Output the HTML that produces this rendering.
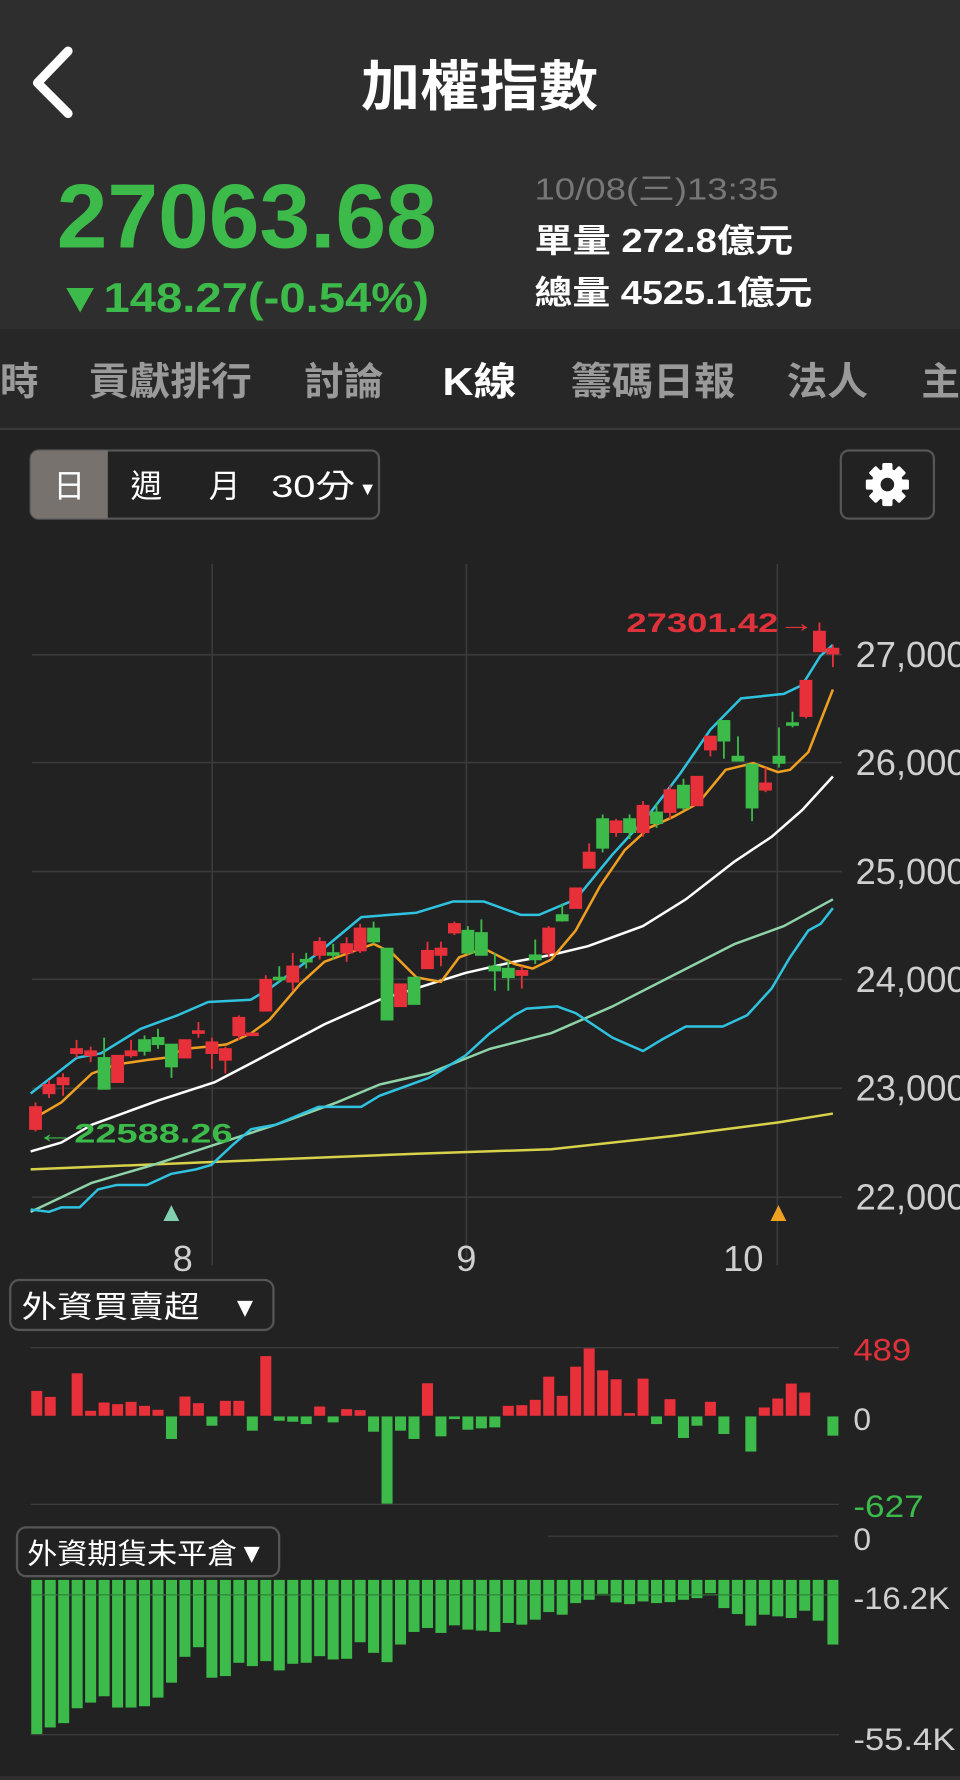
<!DOCTYPE html>
<html><head><meta charset="utf-8"><style>
html,body{margin:0;padding:0;background:#222;width:960px;height:1780px;overflow:hidden}
svg{display:block}
text{font-family:"Liberation Sans","Noto Sans CJK TC",sans-serif}
</style></head><body>
<svg width="960" height="1780" viewBox="0 0 846 1568.6" xmlns="http://www.w3.org/2000/svg">
<rect x="0" y="0" width="846" height="1568.6" fill="#222"/>
<rect x="0" y="0" width="846" height="290" fill="#2e2e2e"/>
<rect x="0" y="290" width="846" height="88" fill="#272727"/>
<rect x="0" y="377" width="846" height="2" fill="#3a3a3a"/>
<path d="M60 45 L33 73 L60 100" stroke="#fff" stroke-width="8" fill="none" stroke-linecap="round" stroke-linejoin="round"/>
<text x="318" y="93" font-size="48" font-weight="bold" fill="#fff" textLength="209" lengthAdjust="spacingAndGlyphs">加權指數</text>
<text x="50" y="218" font-size="80" font-weight="bold" fill="#3cba4a" textLength="335" lengthAdjust="spacingAndGlyphs">27063.68</text>
<text x="50" y="275" font-size="37" font-weight="bold" fill="#3cba4a" textLength="328" lengthAdjust="spacingAndGlyphs">▼148.27(-0.54%)</text>
<text x="471" y="176" font-size="27" fill="#777" textLength="215" lengthAdjust="spacingAndGlyphs">10/08(三)13:35</text>
<text x="471" y="222" font-size="29" font-weight="bold" fill="#fff" textLength="228" lengthAdjust="spacingAndGlyphs">單量 272.8億元</text>
<text x="471" y="268" font-size="29" font-weight="bold" fill="#fff" textLength="245" lengthAdjust="spacingAndGlyphs">總量 4525.1億元</text>
<g font-size="34" fill="#9a9a9a" font-weight="bold">
<text x="0" y="348">時</text>
<text x="78" y="348" textLength="144" lengthAdjust="spacingAndGlyphs">貢獻排行</text>
<text x="268" y="348" textLength="70" lengthAdjust="spacingAndGlyphs">討論</text>
<text x="390" y="348" fill="#fff" textLength="65" lengthAdjust="spacingAndGlyphs">K線</text>
<text x="503" y="348" textLength="145" lengthAdjust="spacingAndGlyphs">籌碼日報</text>
<text x="693" y="348" textLength="72" lengthAdjust="spacingAndGlyphs">法人</text>
<text x="812" y="348">主</text>
</g>
<rect x="27" y="397" width="307" height="60" rx="7" fill="#222" stroke="#555" stroke-width="2"/>
<path d="M34 397 H95 V457 H34 A7 7 0 0 1 27 450 V404 A7 7 0 0 1 34 397Z" fill="#77726d"/>
<g font-size="28" fill="#fff">
<text x="61" y="438" text-anchor="middle">日</text>
<text x="129" y="438" text-anchor="middle">週</text>
<text x="198" y="438" text-anchor="middle">月</text>
<text x="239" y="438" textLength="74" lengthAdjust="spacingAndGlyphs">30分</text>
<text x="316" y="436" font-size="16">▼</text>
</g>
<rect x="741" y="397" width="82" height="60" rx="7" fill="#222" stroke="#555" stroke-width="2"/>
<g transform="translate(782,427)" fill="#fff">
<circle r="14"/>
<g><rect x="-4.5" y="-19" width="9" height="38" rx="1.5"/><rect x="-4.5" y="-19" width="9" height="38" rx="1.5" transform="rotate(45)"/><rect x="-4.5" y="-19" width="9" height="38" rx="1.5" transform="rotate(90)"/><rect x="-4.5" y="-19" width="9" height="38" rx="1.5" transform="rotate(135)"/></g>
<circle r="6" fill="#222"/>
</g>
<g stroke="#3a3a3a" stroke-width="1.5">
<line x1="28" y1="577" x2="742" y2="577"/><line x1="28" y1="672" x2="742" y2="672"/><line x1="28" y1="768" x2="742" y2="768"/><line x1="28" y1="863" x2="742" y2="863"/><line x1="28" y1="959" x2="742" y2="959"/><line x1="28" y1="1055" x2="742" y2="1055"/>
<line x1="187" y1="497" x2="187" y2="1115"/><line x1="411" y1="497" x2="411" y2="1115"/><line x1="685" y1="497" x2="685" y2="1115"/>
</g>
<g font-size="32" fill="#cfcfcf">
<text x="754" y="588">27,000</text><text x="754" y="683">26,000</text><text x="754" y="779">25,000</text><text x="754" y="874">24,000</text><text x="754" y="970">23,000</text><text x="754" y="1066">22,000</text>
<text x="161" y="1120" text-anchor="middle">8</text><text x="411" y="1120" text-anchor="middle">9</text><text x="655" y="1120" text-anchor="middle">10</text>
</g>
<g fill="none" stroke-width="2.2" stroke-linejoin="round">
<polyline stroke="#d8d24a" points="27,1030.5 367,1016.7 485.7,1012.8 593.6,1001 685.4,989.2 734,981.3"/>
<polyline stroke="#8fd3a8" points="27,1067.9 81,1042.3 134.9,1026.6 188.9,1008.9 242.8,991.2 296.8,971.5 334.6,955.7 377.8,945.9 431.7,924.3 485.7,910.5 539.7,886.9 593.6,859.3 647.6,831.8 690.8,816.1 734,792.5"/>
<polyline stroke="#2fc3e0" points="27,1065.9 43.2,1067.9 54,1064 70.2,1064 86.3,1048.2 102.5,1044.3 129.5,1044.3 151.1,1034.4 172.7,1030.5 186.2,1026.6 205.1,1008.9 221.3,995.1 242.8,991.2 280.6,975.4 318.4,975.4 334.6,965.6 377.8,949.9 410.2,930.2 431.7,910.5 453.3,894.7 464.1,888.8 491.1,886.9 507.3,892.8 539.7,914.4 566.6,926.2 582.8,916.4 604.4,904.6 637,904.6 658.4,894.7 680,871.1 696.2,843.6 712.4,820 723.2,814.1 734,800.3"/>
<polyline stroke="#ffffff" points="27,1014.7 54,1006.9 81,991.1 140.3,969.5 188.9,953.8 226.7,934.1 286,902.6 334.6,881 410.2,857.4 453.3,847.5 485.7,841.6 518.1,833.8 566.6,816.1 604.4,792.5 647.6,759 680,737.4 707,713.8 734,684.3"/>
<polyline stroke="#f0a020" points="27,987.2 54,971.5 81,946 102.5,938.1 129.5,934.1 145.7,932.1 161.9,924.3 183.5,922.3 199.7,920.3 221.3,910.5 237.5,898.7 264.4,867.2 286,847.5 307.6,839.7 329.2,831.8 345.4,839.7 367,861.3 388.6,865.3 404.7,843.6 426.3,835.8 453.3,849.5 469.5,853.5 485.7,845.6 507.3,820 528.9,780.7 550.5,749.2 572,729.5 593.6,719.7 615.2,707.9 639.5,678.4 663.8,672.5 685.4,680.4 696.2,678.4 712.4,662.7 734,607.6"/>
<polyline stroke="#2fc3e0" points="27,963.6 67.5,932.2 89,928.2 124,906.6 156.5,894.7 183.5,883 221,881 237.5,871.2 280.6,839.7 318.4,808.2 367,804.3 399.4,794.4 426.3,794.4 458.7,806.2 475,806.2 507.3,792.5 539.7,753.1 572,717.7 599,682.3 626,643 653,615.4 690.8,611.5 707,603.6 723,578 734,568.2"/>
</g>
<g transform="translate(0,493.5) scale(0.5397,0.3934)">
<g fill="#e8303a" stroke="#e8303a" stroke-width="3">
<rect x="49" y="1225" width="18" height="50"/><line x1="58" y1="1215" x2="58" y2="1280"/>
<rect x="71" y="1175" width="18" height="20"/><line x1="80" y1="1165" x2="80" y2="1205"/>
<rect x="94" y="1160" width="18" height="15"/><line x1="103" y1="1150" x2="103" y2="1200"/>
<rect x="116" y="1095" width="18" height="10"/><line x1="125" y1="1075" x2="125" y2="1115"/>
<rect x="139" y="1100" width="18" height="10"/><line x1="148" y1="1090" x2="148" y2="1125"/>
<rect x="183" y="1110" width="18" height="60"/>
<rect x="205" y="1100" width="18" height="10"/><line x1="214" y1="1075" x2="214" y2="1115"/>
<rect x="293" y="1075" width="18" height="40"/>
<rect x="315" y="1055" width="18" height="5"/><line x1="324" y1="1035" x2="324" y2="1070"/>
<rect x="337" y="1080" width="18" height="25"/><line x1="346" y1="1070" x2="346" y2="1140"/>
<rect x="359" y="1095" width="18" height="25"/><line x1="368" y1="1090" x2="368" y2="1150"/>
<rect x="381" y="1025" width="18" height="40"/><line x1="390" y1="1020" x2="390" y2="1075"/>
<rect x="403" y="1060" width="18" height="5"/>
<rect x="425" y="940" width="18" height="70"/><line x1="434" y1="930" x2="434" y2="1010"/>
<rect x="469" y="910" width="18" height="35"/><line x1="478" y1="880" x2="478" y2="965"/>
<rect x="513" y="855" width="18" height="30"/><line x1="522" y1="845" x2="522" y2="895"/>
<rect x="557" y="860" width="18" height="20"/><line x1="566" y1="845" x2="566" y2="900"/>
<rect x="579" y="825" width="18" height="50"/><line x1="588" y1="815" x2="588" y2="880"/>
<rect x="645" y="950" width="18" height="50"/>
<rect x="689" y="875" width="18" height="40"/><line x1="698" y1="855" x2="698" y2="915"/>
<rect x="711" y="870" width="18" height="15"/><line x1="720" y1="855" x2="720" y2="910"/>
<rect x="733" y="815" width="18" height="20"/><line x1="742" y1="810" x2="742" y2="840"/>
<rect x="843" y="920" width="18" height="10"/><line x1="852" y1="910" x2="852" y2="960"/>
<rect x="887" y="825" width="18" height="55"/><line x1="896" y1="820" x2="896" y2="890"/>
<rect x="931" y="735" width="18" height="45"/>
<rect x="953" y="655" width="18" height="35"/><line x1="962" y1="635" x2="962" y2="690"/>
<rect x="997" y="585" width="18" height="25"/><line x1="1006" y1="580" x2="1006" y2="620"/>
<rect x="1041" y="550" width="18" height="60"/><line x1="1050" y1="540" x2="1050" y2="620"/>
<rect x="1085" y="515" width="18" height="50"/><line x1="1094" y1="505" x2="1094" y2="580"/>
<rect x="1129" y="485" width="18" height="65"/>
<rect x="1151" y="395" width="18" height="30"/><line x1="1160" y1="395" x2="1160" y2="440"/>
<rect x="1241" y="500" width="18" height="15"/><line x1="1250" y1="465" x2="1250" y2="520"/>
<rect x="1307" y="270" width="18" height="80"/><line x1="1316" y1="270" x2="1316" y2="355"/>
<rect x="1329" y="160" width="18" height="45"/><line x1="1338" y1="140" x2="1338" y2="205"/>
<rect x="1351" y="198" width="18" height="12"/><line x1="1360" y1="190" x2="1360" y2="240"/>
</g>
<g fill="#3cba4a" stroke="#3cba4a" stroke-width="3">
<rect x="161" y="1115" width="18" height="70"/><line x1="170" y1="1070" x2="170" y2="1185"/>
<rect x="227" y="1075" width="18" height="25"/><line x1="236" y1="1065" x2="236" y2="1110"/>
<rect x="249" y="1070" width="18" height="15"/><line x1="258" y1="1050" x2="258" y2="1095"/>
<rect x="271" y="1085" width="18" height="50"/><line x1="280" y1="1085" x2="280" y2="1160"/>
<rect x="447" y="935" width="18" height="5"/><line x1="456" y1="910" x2="456" y2="945"/>
<rect x="491" y="895" width="18" height="5"/><line x1="500" y1="880" x2="500" y2="915"/>
<rect x="535" y="880" width="18" height="5"/><line x1="544" y1="860" x2="544" y2="895"/>
<rect x="601" y="825" width="18" height="30"/><line x1="610" y1="810" x2="610" y2="860"/>
<rect x="623" y="870" width="18" height="160"/>
<rect x="667" y="935" width="18" height="60"/>
<rect x="755" y="830" width="18" height="50"/><line x1="764" y1="820" x2="764" y2="885"/>
<rect x="777" y="835" width="18" height="50"/><line x1="786" y1="805" x2="786" y2="885"/>
<rect x="799" y="910" width="18" height="10"/><line x1="808" y1="880" x2="808" y2="965"/>
<rect x="821" y="915" width="18" height="20"/><line x1="830" y1="895" x2="830" y2="965"/>
<rect x="865" y="885" width="18" height="10"/><line x1="874" y1="850" x2="874" y2="905"/>
<rect x="909" y="795" width="18" height="13"/><line x1="918" y1="770" x2="918" y2="810"/>
<rect x="975" y="580" width="18" height="65"/><line x1="984" y1="570" x2="984" y2="655"/>
<rect x="1019" y="580" width="18" height="30"/><line x1="1028" y1="570" x2="1028" y2="625"/>
<rect x="1063" y="565" width="18" height="25"/><line x1="1072" y1="545" x2="1072" y2="600"/>
<rect x="1107" y="505" width="18" height="50"/><line x1="1116" y1="490" x2="1116" y2="560"/>
<rect x="1173" y="360" width="18" height="45"/><line x1="1182" y1="360" x2="1182" y2="445"/>
<rect x="1196" y="440" width="18" height="10"/><line x1="1205" y1="395" x2="1205" y2="450"/>
<rect x="1219" y="458" width="18" height="97"/><line x1="1228" y1="458" x2="1228" y2="585"/>
<rect x="1263" y="440" width="18" height="15"/><line x1="1272" y1="375" x2="1272" y2="465"/>
<rect x="1285" y="365" width="18" height="5"/><line x1="1294" y1="340" x2="1294" y2="375"/>
</g>
</g>
<text x="552" y="557" font-size="24" font-weight="bold" fill="#e0323a" textLength="166" lengthAdjust="spacingAndGlyphs">27301.42→</text>
<text x="32" y="1007" font-size="24" font-weight="bold" fill="#3cba4a" textLength="173" lengthAdjust="spacingAndGlyphs">←22588.26</text>
<path d="M151 1062 L158 1076 L144 1076Z" fill="#7fd1b0"/>
<path d="M686 1062 L693 1076 L679 1076Z" fill="#f0a020"/>
<rect x="9" y="1128" width="232" height="44" rx="8" fill="#222" stroke="#555" stroke-width="2"/>
<text x="19" y="1161" font-size="27" fill="#fff" textLength="157" lengthAdjust="spacingAndGlyphs">外資買賣超</text>
<text x="204" y="1160" font-size="24" fill="#fff">▼</text>
<g transform="translate(0,1110.3) scale(0.5397,0.2922)">
<g stroke="#444" stroke-width="3"><line x1="50" y1="265" x2="1370" y2="265"/><line x1="50" y1="737" x2="1370" y2="737"/><line x1="895" y1="833" x2="1370" y2="833"/><line x1="50" y1="1010" x2="1370" y2="1010"/><line x1="50" y1="1432" x2="1370" y2="1432"/></g>
<g fill="#e8303a">
<rect x="51" y="395" width="18" height="75"/><rect x="73" y="413" width="18" height="57"/><rect x="117" y="342" width="18" height="128"/><rect x="139" y="455" width="18" height="15"/><rect x="161" y="430" width="18" height="40"/><rect x="183" y="435" width="18" height="35"/><rect x="205" y="428" width="18" height="42"/><rect x="227" y="440" width="18" height="30"/><rect x="249" y="452" width="18" height="18"/><rect x="293" y="412" width="18" height="58"/><rect x="315" y="432" width="18" height="38"/><rect x="359" y="425" width="18" height="45"/><rect x="381" y="425" width="18" height="45"/><rect x="425" y="290" width="18" height="180"/><rect x="513" y="442" width="18" height="28"/><rect x="557" y="450" width="18" height="20"/><rect x="579" y="453" width="18" height="17"/><rect x="689" y="372" width="18" height="98"/><rect x="821" y="440" width="18" height="30"/><rect x="843" y="438" width="18" height="32"/><rect x="865" y="422" width="18" height="48"/><rect x="887" y="352" width="18" height="118"/><rect x="909" y="410" width="18" height="60"/><rect x="931" y="322" width="18" height="148"/><rect x="953" y="267" width="18" height="203"/><rect x="975" y="333" width="18" height="137"/><rect x="997" y="360" width="18" height="110"/><rect x="1019" y="462" width="18" height="8"/><rect x="1041" y="358" width="18" height="112"/><rect x="1085" y="420" width="18" height="50"/><rect x="1151" y="428" width="18" height="42"/><rect x="1239" y="445" width="18" height="25"/><rect x="1261" y="418" width="18" height="52"/><rect x="1283" y="373" width="18" height="97"/><rect x="1305" y="400" width="18" height="70"/>
</g>
<g fill="#3cba4a">
<rect x="271" y="472" width="18" height="68"/><rect x="337" y="472" width="18" height="28"/><rect x="403" y="472" width="18" height="43"/><rect x="447" y="472" width="18" height="13"/><rect x="469" y="472" width="18" height="16"/><rect x="491" y="472" width="18" height="23"/><rect x="535" y="472" width="18" height="18"/><rect x="601" y="472" width="18" height="46"/><rect x="623" y="472" width="18" height="263"/><rect x="645" y="472" width="18" height="43"/><rect x="667" y="472" width="18" height="68"/><rect x="711" y="472" width="18" height="60"/><rect x="733" y="472" width="18" height="8"/><rect x="755" y="472" width="18" height="40"/><rect x="777" y="472" width="18" height="36"/><rect x="799" y="472" width="18" height="33"/><rect x="1063" y="472" width="18" height="23"/><rect x="1107" y="472" width="18" height="65"/><rect x="1129" y="472" width="18" height="28"/><rect x="1173" y="472" width="18" height="53"/><rect x="1217" y="472" width="18" height="106"/><rect x="1351" y="472" width="18" height="58"/>
</g>
<g fill="#3cba4a">
<rect x="51" y="965" width="18" height="465"/><rect x="73" y="965" width="18" height="445"/><rect x="95" y="965" width="18" height="432"/><rect x="117" y="965" width="18" height="387"/><rect x="139" y="965" width="18" height="370"/><rect x="161" y="965" width="18" height="351"/><rect x="183" y="965" width="18" height="385"/><rect x="205" y="965" width="18" height="385"/><rect x="227" y="965" width="18" height="381"/><rect x="249" y="965" width="18" height="355"/><rect x="271" y="965" width="18" height="310"/><rect x="293" y="965" width="18" height="232"/><rect x="315" y="965" width="18" height="203"/><rect x="337" y="965" width="18" height="295"/><rect x="359" y="965" width="18" height="290"/><rect x="381" y="965" width="18" height="250"/><rect x="403" y="965" width="18" height="260"/><rect x="425" y="965" width="18" height="245"/><rect x="447" y="965" width="18" height="273"/><rect x="469" y="965" width="18" height="253"/><rect x="491" y="965" width="18" height="250"/><rect x="513" y="965" width="18" height="230"/><rect x="535" y="965" width="18" height="240"/><rect x="557" y="965" width="18" height="238"/><rect x="579" y="965" width="18" height="188"/><rect x="601" y="965" width="18" height="220"/><rect x="623" y="965" width="18" height="248"/><rect x="645" y="965" width="18" height="195"/><rect x="667" y="965" width="18" height="157"/><rect x="689" y="965" width="18" height="145"/><rect x="711" y="965" width="18" height="160"/><rect x="733" y="965" width="18" height="137"/><rect x="755" y="965" width="18" height="150"/><rect x="777" y="965" width="18" height="153"/><rect x="799" y="965" width="18" height="157"/><rect x="821" y="965" width="18" height="130"/><rect x="843" y="965" width="18" height="135"/><rect x="865" y="965" width="18" height="120"/><rect x="887" y="965" width="18" height="97"/><rect x="909" y="965" width="18" height="105"/><rect x="931" y="965" width="18" height="70"/><rect x="953" y="965" width="18" height="60"/><rect x="975" y="965" width="18" height="42"/><rect x="997" y="965" width="18" height="68"/><rect x="1019" y="965" width="18" height="73"/><rect x="1041" y="965" width="18" height="65"/><rect x="1063" y="965" width="18" height="70"/><rect x="1085" y="965" width="18" height="67"/><rect x="1107" y="965" width="18" height="60"/><rect x="1129" y="965" width="18" height="55"/><rect x="1151" y="965" width="18" height="40"/><rect x="1173" y="965" width="18" height="85"/><rect x="1195" y="965" width="18" height="103"/><rect x="1217" y="965" width="18" height="138"/><rect x="1239" y="965" width="18" height="105"/><rect x="1261" y="965" width="18" height="110"/><rect x="1283" y="965" width="18" height="115"/><rect x="1305" y="965" width="18" height="93"/><rect x="1327" y="965" width="18" height="123"/><rect x="1351" y="965" width="18" height="195"/>
</g>
<line x1="50" y1="1010" x2="1370" y2="1010" stroke="#2a7a34" stroke-width="3"/>
</g>
<g font-size="28">
<text x="752" y="1199" fill="#e0323a" textLength="51" lengthAdjust="spacingAndGlyphs">489</text>
<text x="752" y="1260" fill="#cfcfcf">0</text>
<text x="752" y="1337" fill="#3cba4a" textLength="62" lengthAdjust="spacingAndGlyphs">-627</text>
<text x="752" y="1366" fill="#cfcfcf">0</text>
<text x="752" y="1418" fill="#cfcfcf" textLength="85" lengthAdjust="spacingAndGlyphs">-16.2K</text>
<text x="752" y="1542" fill="#cfcfcf" textLength="90" lengthAdjust="spacingAndGlyphs">-55.4K</text>
</g>
<rect x="15" y="1346" width="231" height="43" rx="8" fill="#222" stroke="#555" stroke-width="2"/>
<text x="24" y="1378" font-size="25" fill="#fff" textLength="185" lengthAdjust="spacingAndGlyphs">外資期貨未平倉</text>
<text x="210" y="1377" font-size="24" fill="#fff">▼</text>
<rect x="0" y="1565" width="846" height="4" fill="#2e2e2e"/>
</svg>
</body></html>
